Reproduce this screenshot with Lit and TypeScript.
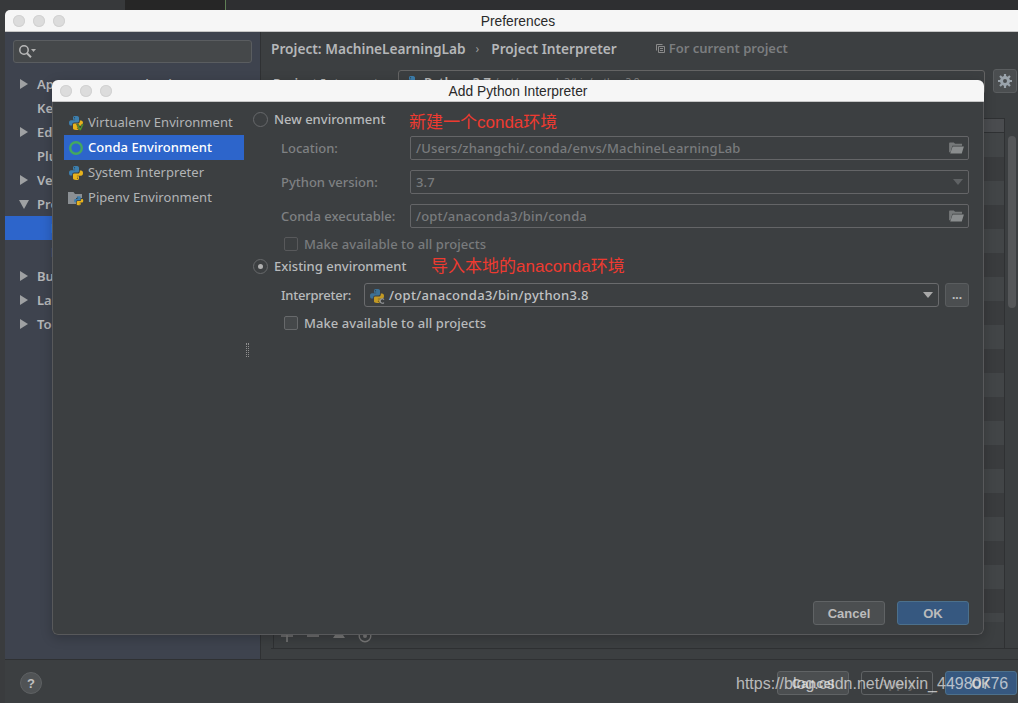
import { LitElement, html, css, svg } from "lit";
import { customElement } from "lit/decorators.js";

const pyShapes = svg`
  <path fill="#3d7fae" d="M5 2.600C5 1.400 6 1 8 1s3 .5 3 1.700V6c0 .9-.6 1.400-1.400 1.400H6.300C5 7.400 4.200 8.200 4.200 9.500V10.600H3C1.700 10.600 1 9.700 1 8s.7-2.700 2-2.700h4.200v-.6H5z"/>
  <path fill="#e8b31c" d="M11 13.400c0 1.200-1 1.600-3 1.600s-3-.5-3-1.700V10c0-.9.6-1.400 1.400-1.400h3.300c1.300 0 2.100-.8 2.100-2.100V5.400H13c1.300 0 2 .9 2 2.600s-.7 2.700-2 2.700H8.800v.6H11z"/>
  <circle cx="6.500" cy="2.800" r=".7" fill="#2a4a60"/><circle cx="9.500" cy="13.200" r=".7" fill="#7a5e10"/>`;

const py = html`<svg class="ic" viewBox="0 0 16 16" aria-hidden="true">${pyShapes}</svg>`;

const pyVenv = html`<svg class="ic" viewBox="0 0 16 16" aria-hidden="true">${pyShapes}
  <path d="M8.500 9l3 6.500h1.400l3-6.500h-1.900l-1.800 4-1.800-4z" fill="#4f9e2e" stroke="#3c3f41" stroke-width=".5"/></svg>`;

const pyPipenv = html`<svg class="ic" viewBox="0 0 16 16" aria-hidden="true">
  <path fill="#8b9094" d="M0 2h5.500l1.500 2h7v4H8v6H0z"/>
  <g transform="translate(5.500 5.500) scale(.65)">${pyShapes}</g></svg>`;

const pyConda = html`<svg class="ic dim" viewBox="0 0 16 16" aria-hidden="true">${pyShapes}
  <path d="M15 11.500a2.200 2.200 0 1 0 0 3" fill="none" stroke="#b8babc" stroke-width="1.100"/></svg>`;

const folder = html`<svg class="fold" viewBox="0 0 16 13" aria-hidden="true">
  <path fill="#76797a" d="M0 1.500C0 .8.500.5 1 .5h4l1.500 1.500H14v2H3.500L1.500 11H0z"/>
  <path fill="#8a8d8e" d="M3.800 5H16l-2.300 7.500H1.200z"/>
</svg>`;

const tree: [string, string, string][] = [
  ["r", "Appearance & Behavior", ""],
  ["n", "Keymap", ""],
  ["r", "Editor", ""],
  ["n", "Plugins", ""],
  ["r", "Version Control", ""],
  ["d", "Project: MachineLearningLab", ""],
  ["s", "Project Interpreter", "sel"],
  ["s", "Project Structure", ""],
  ["r", "Build, Execution, Deployment", ""],
  ["r", "Languages & Frameworks", ""],
  ["r", "Tools", ""],
];

@customElement("app-root")
export class AppRoot extends LitElement {
  static styles = css`
    :host { display: block; width: 1018px; height: 703px; position: relative; overflow: hidden; background: #3a3c3e;
      font-family: "Noto Sans", "DejaVu Sans", sans-serif; font-size: 13px; color: #bbb; }
    .desk { display: flex; height: 10px; }
    .desk i { display: block; }
    .d1 { width: 125px; background: #37393b; }
    .d2 { width: 100px; background: #262626; border-right: 1px solid #5f7f55; }
    .d3 { flex: 1; background: #2e2f31; }

    .win { position: absolute; display: flex; flex-direction: column; box-sizing: border-box; overflow: hidden; background: #3c3f41; }
    .pref { left: 5px; top: 10px; width: 1013px; height: 693px; border-radius: 5px 0 0 0; }
    .dlg { left: 52px; top: 80px; width: 932px; height: 555px; border-radius: 6px; box-shadow: 0 3px 12px rgba(0,0,0,.22); }

    .title { flex: none; height: 22px; box-sizing: border-box; display: flex; align-items: center; position: relative; justify-content: center;
      background: #f6f6f6; border-bottom: 1px solid #c6c6c6; color: #2a2a2a; font-family: "Liberation Sans", sans-serif; font-size: 13.800px; padding-top: 1px; }
    .pref .title { padding-left: 13px; }
    .lights { position: absolute; left: 8px; top: 5px; display: flex; gap: 8px; }
    .lights i { width: 12px; height: 12px; border-radius: 50%; background: #dcdcdc; box-shadow: inset 0 0 0 1px #d2d2d2; }

    .pbody { flex: 1; display: flex; min-height: 0; border-bottom: 1px solid #2f3133; }
    .side { width: 255px; flex: none; background: #3e434e; border-right: 1px solid #2f3133; box-sizing: content-box; padding: 8px 0 0; }
    .search { margin: 0 8px 9px; height: 23px; box-sizing: border-box; border: 1px solid #5a5d60; border-radius: 3px; background: #45484a;
      display: flex; align-items: center; padding-left: 4px; }
    .search svg { width: 19px; height: 15px; }
    .trow { height: 24px; display: flex; align-items: center; font-weight: 600; color: #b4b6b8; white-space: nowrap; padding-left: 14px; }
    .trow.s { padding-left: 46px; }
    .trow.sel { background: #2d65cb; color: #fff; margin-top: 0; }
    .arrow { width: 18px; flex: none; display: flex; }
    .arrow svg { width: 10px; height: 10px; }

    .main { flex: 1; min-width: 0; padding: 4px 0 10px 10px; display: flex; flex-direction: column; }
    .crumb { height: 24px; display: flex; align-items: center; font-weight: 600; color: #b5b7b9; font-size: 13.700px; white-space: nowrap; }
    .crumb .sep { margin: 0 12px 0 10px; color: #9a9a9a; font-weight: 400; font-size: 12px; }
    .crumb .cur { margin-left: 39px; color: #7b7d7f; display: flex; align-items: center; gap: 4px; font-size: 13px; }
    .crumb svg { width: 9px; height: 9px; }
    .pi { display: flex; align-items: center; margin-top: 10px; height: 24px; padding-left: 2px; }
    .pi .lb { width: 125px; font-weight: 600; flex: none; padding-top: 1px; }
    .pi .box { width: 587px; height: 24px; box-sizing: border-box; border: 1px solid #646464; border-radius: 3px; display: flex; align-items: center; gap: 4px; padding-left: 5px; }
    .pi .box b { font-weight: 600; }
    .pi .box span { font-size: 10px; color: #888; }
    .gear { width: 24px; height: 24px; margin: -2px 0 0 8px; box-sizing: border-box; background: #4b4e50; border: 1px solid #5a5d5f; border-radius: 3px; display: flex; align-items: center; justify-content: center; }
    .gear svg { width: 14px; height: 14px; }
    .tblwrap { flex: 1; margin-top: 24px; padding-left: 2px; display: flex; min-height: 0; border-bottom: 1px solid #2f3133; }
    .tbl { width: 732px; flex: none; display: flex; flex-direction: column; border-left: 1px solid #2f3133; border-right: 1px solid #2f3133; border-top: 1px solid #2f3133; box-sizing: border-box; }
    .thead { height: 13px; background: #4a4c4f; border-bottom: 1px solid #2f3133; flex: none; }
    .rows { flex: 1; display: flex; flex-direction: column; overflow: hidden; min-height: 0; }
    .rows i { display: block; height: 24px; flex: none; background: #424547; }
    .rows i:nth-child(even) { background: #3a3c3e; }
    .ttools { height: 26px; flex: none; background: #3c3f41; display: flex; gap: 12px; padding: 7px 6px 0; box-sizing: border-box; }
    .ttools svg { width: 14px; height: 14px; }
    .sb { flex: 1; padding: 18px 2px 0 3px; }
    .sb i { display: block; height: 172px; width: 8px; background: #555759; border-radius: 4px; }

    .pfoot { flex: none; height: 43px; box-sizing: border-box; display: flex; align-items: center; padding: 3px 1px 0 15px; }
    .help { width: 22px; height: 22px; border-radius: 50%; background: #505355; border: 1px solid #5e6163; box-sizing: border-box; display: flex; align-items: center; justify-content: center; font-weight: 700; color: #c0c0c0; font-size: 13px; font-family: "Liberation Sans", sans-serif; }
    .spacer { flex: 1; }
    .btn { width: 72px; height: 24px; box-sizing: border-box; border: 1px solid #606365; border-radius: 3px; background: #4b4e50; color: #bcbcbc; display: flex; align-items: center; justify-content: center; font-weight: 700; font-family: "Liberation Sans", sans-serif; font-size: 13px; margin-left: 12px; }
    .btn.ok { background: #365880; border-color: #4c708c; color: #bbb; }
    .btn.ghost { background: #3c3f41; color: #666; }

    .dbody { flex: 1; min-height: 0; display: flex; flex-direction: column; border: 1px solid #58595b; border-top: none; border-radius: 0 0 6px 6px; }
    .dmain { flex: 1; display: flex; min-height: 0; padding: 8px 14px 0 11px; }
    .list { width: 180px; flex: none; }
    .li { height: 25px; box-sizing: border-box; padding: 0 0 1px 4px; display: flex; align-items: center; gap: 4px; white-space: nowrap; color: #b2b4b6; letter-spacing: .05px; }
    .li.sel { background: #2d65cb; color: #fff; font-weight: 500; }
    .ic { width: 16px; height: 16px; flex: none; margin-top: 1px; }
    .ic.dim { opacity: .78; }
    .ring { width: 16px; height: 16px; flex: none; margin-top: 1px; }
    .splitter { width: 9px; box-sizing: border-box; flex: none; display: flex; flex-direction: column; align-items: center; padding: 233px 2px 0 0; }
    .splitter i { width: 1px; height: 14px; border-left: 1px dotted #8f8f8f; border-right: 1px dotted #8f8f8f; }
    .form { flex: 1; min-width: 0; display: flex; flex-direction: column; position: relative; }
    .rad { height: 18px; display: flex; align-items: center; gap: 6px; font-weight: 500; color: #b8babc; }
    .rad u { width: 15px; height: 15px; flex: none; box-sizing: border-box; border: 1px solid #67696b; border-radius: 50%; display: flex; align-items: center; justify-content: center; text-decoration: none; }
    .rad u::after { content: ""; width: 5px; height: 5px; border-radius: 50%; background: #b0b0b0; }
    .rad u.off::after { display: none; }
    .frow { display: flex; align-items: center; height: 24px; padding-left: 28px; }
    .frow label { flex: none; color: #7f8183; font-weight: 500; white-space: nowrap; }
    .frow label.w1 { width: 129px; }
    .frow label.w2 { width: 83px; color: #b8babc; letter-spacing: -.25px; }
    .fld { flex: 1; height: 24px; box-sizing: border-box; border: 1px solid #646567; border-radius: 2px; display: flex; align-items: center; padding: 0 4px 0 5px; color: #797b7d; font-weight: 500; min-width: 0; letter-spacing: .16px; }
    .fld span { flex: 1; }
    .fld .fold { width: 15px; height: 12px; flex: none; }
    .caret { width: 0; height: 0; border-left: 5px solid transparent; border-right: 5px solid transparent; border-top: 6px solid #5f6264; flex: none; margin-right: 1px; }
    .fld.on { color: #c0c2c4; border-color: #6a6b6d; border-radius: 3px; gap: 4px; padding-left: 4px; letter-spacing: .3px; }
    .fld.on .caret { border-top-color: #a8a8a8; }
    .dots { width: 24px; height: 24px; margin-left: 6px; flex: none; box-sizing: border-box; background: #4b4e50; border: 1px solid #5a5d5f; border-radius: 3px; color: #c0c0c0; display: flex; align-items: center; justify-content: center; font-weight: 700; font-size: 12px; line-height: 1; padding-bottom: 1px; }
    .chk { height: 18px; display: flex; align-items: center; gap: 6px; padding-left: 31px; font-weight: 500; color: #b8babc; letter-spacing: .07px; }
    .chk u { width: 14px; height: 14px; box-sizing: border-box; flex: none; border: 1px solid #67696b; border-radius: 2px; background: #45484a; }
    .chk.off { color: #797b7d; }
    .chk.off u { border-color: #58595b; background: none; }
    .m4 { margin-top: 4px; } .m7 { margin-top: 7px; } .m8 { margin-top: 8px; } .m10 { margin-top: 10px; }
    .note { position: absolute; color: #ee3a30; font-size: 17px; white-space: nowrap; font-family: "Liberation Sans", "Noto Sans CJK SC", sans-serif; line-height: 20px; }
    .n1 { left: 156px; top: 3px; }
    .n2 { left: 178px; top: 147px; }
    .dfoot { flex: none; height: 33px; display: flex; justify-content: flex-end; padding-right: 14px; }
    .wm { position: absolute; left: 736px; top: 674px; font-family: "Liberation Sans", sans-serif; font-size: 16px; line-height: 20px; color: rgba(235,235,235,.72); white-space: nowrap; }
  `;

  render() {
    const tri = (k: string) => k === "r"
      ? svg`<path fill="#9fa1a3" d="M1 0l8 5-8 5z"/>`
      : svg`<path fill="#9fa1a3" d="M0 1h10L5 10z"/>`;
    return html`
      <div class="desk"><i class="d1"></i><i class="d2"></i><i class="d3"></i></div>

      <div class="win pref">
        <div class="title"><div class="lights"><i></i><i></i><i></i></div>Preferences</div>
        <div class="pbody">
          <div class="side">
            <div class="search"><svg viewBox="0 0 19 15" aria-hidden="true"><circle cx="6" cy="6" r="4.200" fill="none" stroke="#b8b8b8" stroke-width="1.500"/><path d="M9 9.200l4 4" stroke="#b8b8b8" stroke-width="2"/><path d="M13 5h5l-2.500 3z" fill="#b0b0b0"/></svg></div>
            ${tree.map(([k, t, c]) => html`<div class="trow ${k} ${c}">
              ${k === "r" || k === "d" ? html`<span class="arrow"><svg viewBox="0 0 10 10" aria-hidden="true">${tri(k)}</svg></span>` : k === "n" ? html`<span class="arrow"></span>` : ""}${t}</div>`)}
          </div>
          <div class="main">
            <div class="crumb">Project: MachineLearningLab<span class="sep">›</span>Project Interpreter
              <span class="cur"><svg viewBox="0 0 9 9" aria-hidden="true"><path fill="none" stroke="#8a8a8a" d="M.5 6.500V.5h6M2.500 2.500h6v6h-6zM4 4.500h3M4 6.500h3"/></svg>For current project</span></div>
            <div class="pi"><span class="lb">Project Interpreter:</span>
              <div class="box">${py}<b>Python 3.7</b><span>/opt/anaconda3/bin/python3.8</span></div>
              <div class="gear"><svg viewBox="0 0 14 14" aria-hidden="true"><circle cx="7" cy="7" r="3.500" fill="none" stroke="#9aa3ab" stroke-width="3"/><path stroke="#9aa3ab" stroke-width="2.200" d="M7 0v3M7 11v3M0 7h3M11 7h3M2 2l2 2M10 10l2 2M2 12l2-2M10 4l2-2"/></svg></div>
            </div>
            <div class="tblwrap">
              <div class="tbl">
                <div class="thead"></div>
                <div class="rows">${Array.from({ length: 21 }, () => html`<i></i>`)}</div>
                <div class="ttools">
                  <svg viewBox="0 0 14 14" aria-hidden="true"><path d="M7 1v12M1 7h12" stroke="#777" stroke-width="1.600"/></svg>
                  <svg viewBox="0 0 14 14" aria-hidden="true"><path d="M1 7h12" stroke="#777" stroke-width="1.600"/></svg>
                  <svg viewBox="0 0 14 14" aria-hidden="true"><path d="M7 0l6 9H1z" fill="#777"/></svg>
                  <svg viewBox="0 0 14 14" aria-hidden="true"><circle cx="7" cy="7" r="5.800" fill="none" stroke="#777" stroke-width="1.400"/><circle cx="7" cy="7" r="2" fill="#777"/></svg>
                </div>
              </div>
              <div class="sb"><i></i></div>
            </div>
          </div>
        </div>
        <div class="pfoot"><div class="help">?</div><div class="spacer"></div>
          <div class="btn">Cancel</div><div class="btn ghost">Apply</div><div class="btn ok">OK</div></div>
      </div>

      <div class="win dlg">
        <div class="title"><div class="lights"><i></i><i></i><i></i></div>Add Python Interpreter</div>
        <div class="dbody">
          <div class="dmain">
            <div class="list">
              <div class="li">${pyVenv}Virtualenv Environment</div>
              <div class="li sel"><svg class="ring" viewBox="0 0 16 16" aria-hidden="true"><circle cx="8" cy="8" r="5.800" fill="none" stroke="#43a860" stroke-width="2.400"/></svg>Conda Environment</div>
              <div class="li">${py}System Interpreter</div>
              <div class="li">${pyPipenv}Pipenv Environment</div>
            </div>
            <div class="splitter"><i></i></div>
            <div class="form">
              <div class="rad"><u class="off"></u>New environment</div>
              <div class="frow m8"><label class="w1">Location:</label><div class="fld"><span>/Users/zhangchi/.conda/envs/MachineLearningLab</span>${folder}</div></div>
              <div class="frow m10"><label class="w1">Python version:</label><div class="fld"><span>3.7</span><i class="caret"></i></div></div>
              <div class="frow m10"><label class="w1">Conda executable:</label><div class="fld"><span>/opt/anaconda3/bin/conda</span>${folder}</div></div>
              <div class="chk off m7"><u></u>Make available to all projects</div>
              <div class="rad m4"><u></u>Existing environment</div>
              <div class="frow m8"><label class="w2">Interpreter:</label><div class="fld on">${pyConda}<span>/opt/anaconda3/bin/python3.8</span><i class="caret"></i></div><div class="dots">...</div></div>
              <div class="chk m7"><u></u>Make available to all projects</div>
              <div class="note n1">新建一个conda环境</div>
              <div class="note n2">导入本地的anaconda环境</div>
            </div>
          </div>
          <div class="dfoot"><div class="btn">Cancel</div><div class="btn ok">OK</div></div>
        </div>
      </div>

      <div class="wm">https://blog.csdn.net/weixin_44980776</div>
    `;
  }
}
